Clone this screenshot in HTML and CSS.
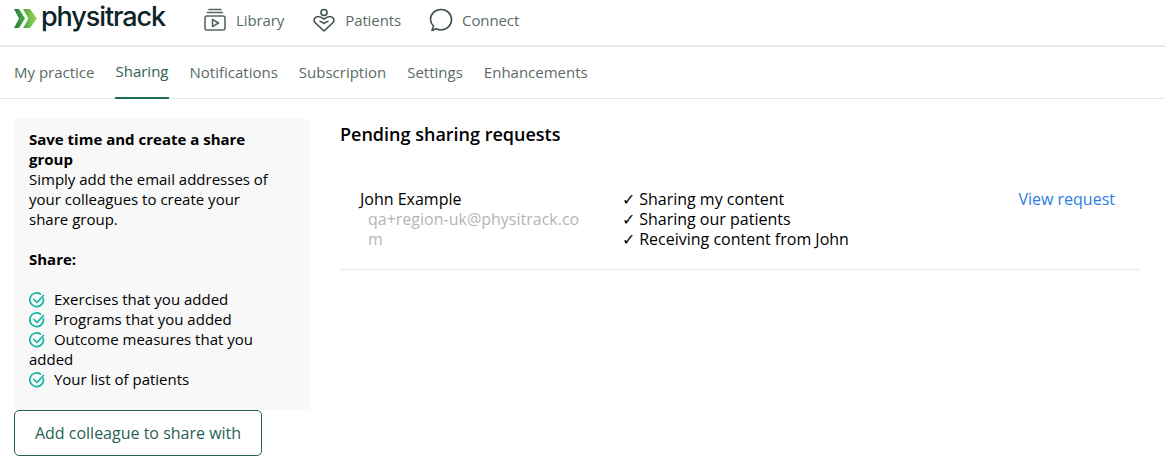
FILE: index.html
```html
<!DOCTYPE html>
<html>
<head>
  <title>Sharing</title>
  <link rel="stylesheet" href="styles.css">
</head>
<body>
  <header class="topbar">
    <div class="logo">
      <svg class="logo-mark" width="23" height="19" viewBox="0 0 23 19">
        <defs>
          <linearGradient id="chevA" x1="0" x2="1"><stop offset="0" stop-color="#1e7d3c"/><stop offset="1" stop-color="#4fae3f"/></linearGradient>
          <linearGradient id="chevB" x1="0" x2="1"><stop offset="0" stop-color="#45a83f"/><stop offset="1" stop-color="#a4d65a"/></linearGradient>
        </defs>
        <path d="M0 0h5l6 9.500-6 9.500H0l5-9.500z" fill="url(#chevA)"/>
        <path d="M9 0h7l7 9.500-7 9.500H9l5.500-9.500z" fill="url(#chevB)"/>
      </svg>
      <span class="logo-text">physitrack</span>
    </div>
    <nav class="mainnav">
      <a class="mainnav-item">
        <svg width="24" height="24" viewBox="0 0 24 24" fill="none" stroke="#56665f" stroke-width="1.6" stroke-linecap="round" stroke-linejoin="round">
          <path d="M6 1.500h12M4.500 4.500h15"/>
          <rect x="2" y="8" width="20" height="14" rx="2"/>
          <path d="M9.500 11.500v7l6-3.500z"/>
        </svg>
        Library
      </a>
      <a class="mainnav-item">
        <svg width="24" height="24" viewBox="0 0 24 24" fill="none" stroke="#3f4f49" stroke-width="1.6" stroke-linecap="round" stroke-linejoin="round">
          <circle cx="12" cy="4.500" r="3"/>
          <path d="M12 23l-8.500-8c-3-3-.5-6.500 2.500-6.500 2.500 0 4 1 6 2.500 2-1.500 3.500-2.500 6-2.500 3 0 5.500 3.500 2.500 6.500z"/>
          <path d="M8 13.500c1.500 0 2.800 1 4 2 1.200-1 2.500-2 4-2"/>
        </svg>
        Patients
      </a>
      <a class="mainnav-item">
        <svg width="24" height="24" viewBox="0 0 24 24" fill="none" stroke="#3f4f49" stroke-width="1.6" stroke-linecap="round" stroke-linejoin="round">
          <path d="M3 22.500l1.500-4.500C2.500 16 1.500 14 1.500 11.500 1.500 6 6 1.500 12 1.500s10.500 4.500 10.500 10-4.500 10.500-10.500 10.500c-2 0-3.500-.5-5-1.200z"/>
        </svg>
        Connect
      </a>
    </nav>
  </header>

  <nav class="subnav">
    <a>My practice</a>
    <a class="active">Sharing</a>
    <a>Notifications</a>
    <a>Subscription</a>
    <a>Settings</a>
    <a>Enhancements</a>
  </nav>

  <main class="content">
    <aside class="sidebar">
      <div class="panel">
        <b>Save time and create a share group</b><br>
        Simply add the email addresses of your colleagues to create your share group.<br><br>
        <b>Share:</b><br><br>
        <svg class="tick" width="16" height="16" viewBox="0 0 16 16" fill="none" stroke="#14b5a0" stroke-width="1.700" stroke-linecap="round" stroke-linejoin="round"><path d="M14.300 6.500A6.800 6.800 0 1 1 11.500 2.200"/><path d="M5 7.500l3 3 6.500-7"/></svg>
        Exercises that you added<br>
        <svg class="tick" width="16" height="16" viewBox="0 0 16 16" fill="none" stroke="#14b5a0" stroke-width="1.700" stroke-linecap="round" stroke-linejoin="round"><path d="M14.300 6.500A6.800 6.800 0 1 1 11.500 2.200"/><path d="M5 7.500l3 3 6.500-7"/></svg>
        Programs that you added<br>
        <svg class="tick" width="16" height="16" viewBox="0 0 16 16" fill="none" stroke="#14b5a0" stroke-width="1.700" stroke-linecap="round" stroke-linejoin="round"><path d="M14.300 6.500A6.800 6.800 0 1 1 11.500 2.200"/><path d="M5 7.500l3 3 6.500-7"/></svg>
        Outcome measures that you added<br>
        <svg class="tick" width="16" height="16" viewBox="0 0 16 16" fill="none" stroke="#14b5a0" stroke-width="1.700" stroke-linecap="round" stroke-linejoin="round"><path d="M14.300 6.500A6.800 6.800 0 1 1 11.500 2.200"/><path d="M5 7.500l3 3 6.500-7"/></svg>
        Your list of patients
      </div>
      <button class="add-btn">Add colleague to share with</button>
    </aside>

    <section class="requests">
      <h2>Pending sharing requests</h2>
      <div class="request">
        <div class="person">
          John Example
          <div class="email">qa+region-uk@physitrack.com</div>
        </div>
        <div class="perms">
          <div>✓ Sharing my content</div>
          <div>✓ Sharing our patients</div>
          <div>✓ Receiving content from John</div>
        </div>
        <a class="view-link">View request</a>
      </div>
    </section>
  </main>
</body>
</html>
```

FILE: styles.css
```css
* { box-sizing: border-box; }
body { margin: 0; font-family: "Open Sans", sans-serif; font-size: 16px; line-height: 20px; color: #000; background: #fff; overflow: hidden; }

.topbar { display: flex; height: 47px; padding-left: 14px; border-bottom: 2px solid #e2ece9; }
.logo { display: flex; align-items: flex-start; width: 189px; }
.logo-mark { margin-top: 9px; margin-right: 4px; flex-shrink: 0; }
.logo-text { font-family: "Inter", sans-serif; font-size: 27px; font-weight: 500; line-height: 34px; letter-spacing: -1.1px; color: #0c2427; }

.mainnav { display: flex; gap: 28px; }
.mainnav-item { display: flex; align-items: center; gap: 9px; height: 39px; color: #5a6b66; font-size: 15px; letter-spacing: -0.1px; }

.subnav { display: flex; gap: 21px; height: 52px; padding-left: 14px; border-bottom: 1px solid #dfe8e6; }
.subnav a { height: 52px; padding-top: 15px; color: #5a6b66; font-size: 15px; }
.subnav a.active { color: #2f5f55; padding-top: 14px; border-bottom: 2px solid #1d6b58; }

.content { display: flex; padding: 20px 25px 0 14px; }
.sidebar { width: 296px; flex-shrink: 0; }
.panel { background: #f8f8f8; padding: 10px 30px 20px 15px; height: 291px; border-radius: 3px; font-size: 15px; }
.tick { vertical-align: -3px; margin-right: 5px; }
.add-btn { display: block; width: 248px; height: 46px; background: #fff; border: 1px solid #2a6355; border-radius: 5px; color: #2a5f55; font: 16px/20px "Open Sans", sans-serif; }

.requests { flex: 1; margin-left: 30px; }
.requests h2 { margin: 4px 0 0; font-size: 18px; font-weight: 600; line-height: 22px; }
.request { display: flex; margin-top: 22px; padding: 22px 25px 20px 20px; border-bottom: 1px solid #e9e9e9; }
.person { width: 263px; padding-right: 40px; }
.email { padding-left: 8px; color: #b5b5b5; word-break: break-all; }
.perms { flex: 1; margin-left: -1px; }
.view-link { color: #2b7de9; }
```
